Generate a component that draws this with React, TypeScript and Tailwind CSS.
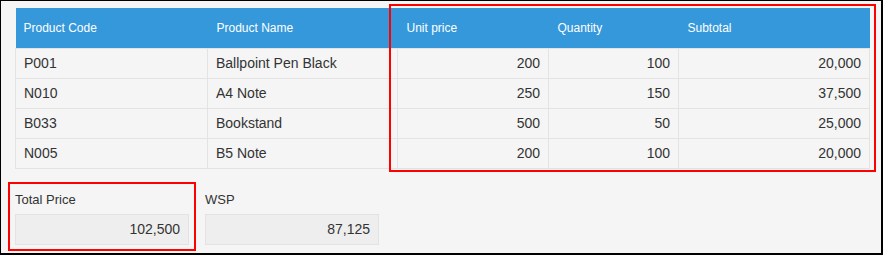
import React from "react";

const rows = [
  { code: "P001", name: "Ballpoint Pen Black", price: "200", qty: "100", subtotal: "20,000" },
  { code: "N010", name: "A4 Note", price: "250", qty: "150", subtotal: "37,500" },
  { code: "B033", name: "Bookstand", price: "500", qty: "50", subtotal: "25,000" },
  { code: "N005", name: "B5 Note", price: "200", qty: "100", subtotal: "20,000" },
];

function Field({ label, value }: { label: string; value: string }) {
  return (
    <div className="w-[174px]">
      <div className="h-[22px] leading-[22px] text-[13px] text-[#333]">{label}</div>
      <div className="mt-[3px] h-[31px] border border-[#e3e3e3] bg-[#eeeeee] px-[8px] text-right text-[14px] leading-[29px] text-[#333]">
        {value}
      </div>
    </div>
  );
}

export default function App() {
  return (
    <div
      className="relative w-[883px] h-[255px] overflow-hidden border-l border-t border-r-2 border-b-2 border-black bg-[#f5f5f5] pl-[14px] pt-[7px]"
      style={{ fontFamily: '"Liberation Sans", Arial, sans-serif' }}
    >
      <table className="w-[854px] table-fixed border-collapse">
        <colgroup>
          <col className="w-[192px]" />
          <col className="w-[190px]" />
          <col className="w-[151px]" />
          <col className="w-[130px]" />
          <col className="w-[191px]" />
        </colgroup>
        <thead>
          <tr className="h-[40px] bg-[#3498db] text-left text-[12px] font-normal text-white">
            <th className="pl-[8px] font-normal">Product Code</th>
            <th className="pl-[9px] font-normal">Product Name</th>
            <th className="pl-[9px] font-normal">Unit price</th>
            <th className="pl-[9px] font-normal">Quantity</th>
            <th className="pl-[9px] font-normal">Subtotal</th>
          </tr>
        </thead>
        <tbody className="text-[14px] text-[#333]">
          {rows.map((r) => (
            <tr key={r.code} className="h-[30px]">
              <td className="border border-[#e3e3e3] pl-[8px]">{r.code}</td>
              <td className="border border-[#e3e3e3] pl-[8px]">{r.name}</td>
              <td className="border border-[#e3e3e3] pr-[8px] text-right">{r.price}</td>
              <td className="border border-[#e3e3e3] pr-[8px] text-right">{r.qty}</td>
              <td className="border border-[#e3e3e3] pr-[8px] text-right">{r.subtotal}</td>
            </tr>
          ))}
        </tbody>
      </table>

      <div className="mt-[20px] flex gap-[16px]">
        <Field label="Total Price" value="102,500" />
        <Field label="WSP" value="87,125" />
      </div>

      {/* highlight boxes */}
      <div className="pointer-events-none absolute left-[388px] top-[3px] h-[168px] w-[487px] border-2 border-[#ff0000]" />
      <div className="pointer-events-none absolute left-[7px] top-[181px] h-[69px] w-[188px] border-2 border-[#ff0000]" />
    </div>
  );
}
